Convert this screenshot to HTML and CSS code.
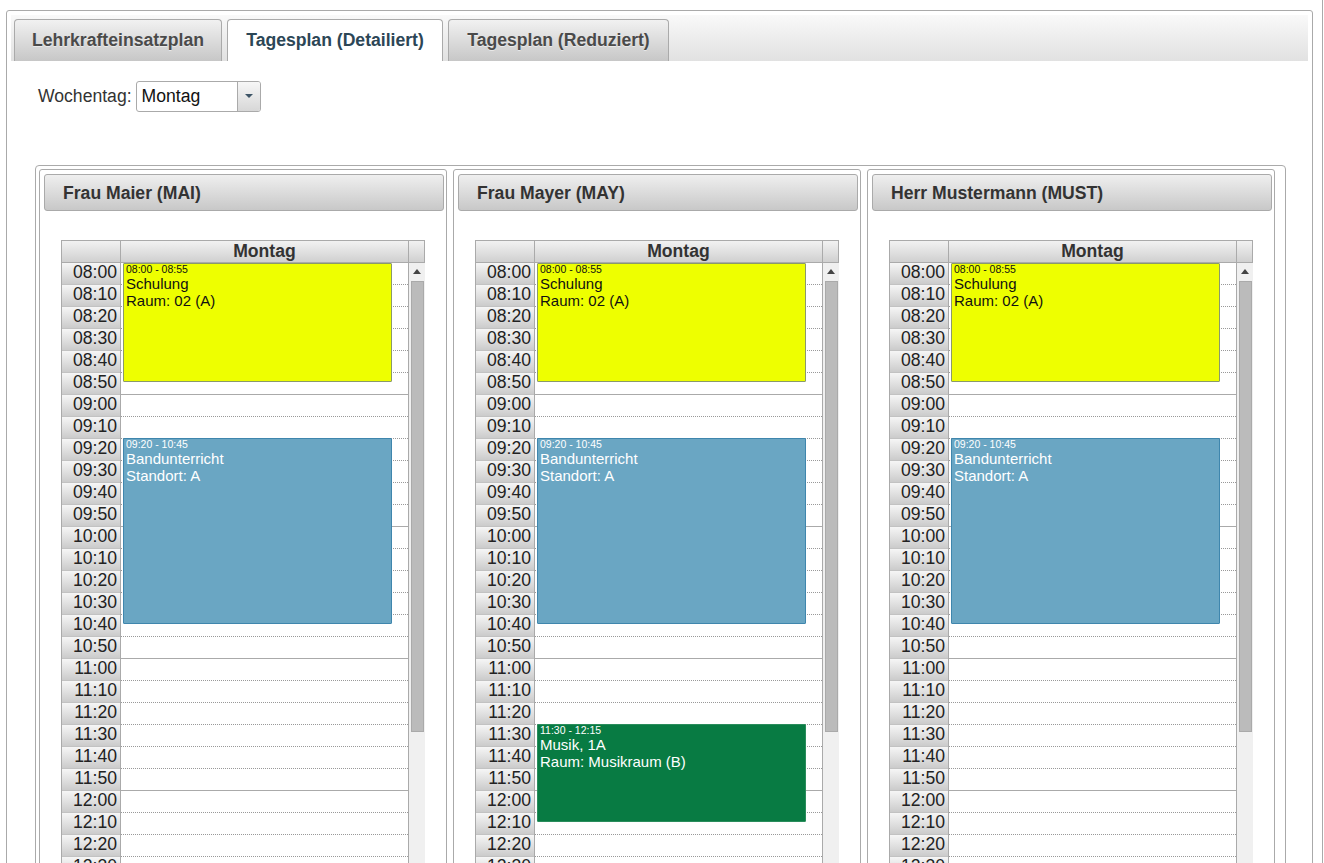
FILE: index.html
```html
<!DOCTYPE html>
<html lang="de">
<head>
<meta charset="utf-8">
<title>Tagesplan</title>
<link rel="stylesheet" href="styles.css">
</head>
<body>
<div class="frame">
  <div class="window">
    <div class="tabbar">
      <div class="tab w1">Lehrkrafteinsatzplan</div>
      <div class="tab w2 active">Tagesplan (Detailiert)</div>
      <div class="tab w3">Tagesplan (Reduziert)</div>
    </div>
    <div class="content">
      <div class="toolbar">
        <span class="label">Wochentag:</span>
        <div class="select"><span class="value">Montag</span><span class="btn"><span class="arrow"></span></span></div>
      </div>
      <div class="planner">

        <div class="col">
          <div class="col-head">Frau Maier (MAI)</div>
          <div class="cal">
            <div class="cal-head"><div class="h-time"></div><div class="h-day">Montag</div><div class="h-scroll"></div></div>
            <div class="cal-body">
              <div class="times">
                <div class="t">08:00</div><div class="t">08:10</div><div class="t">08:20</div><div class="t">08:30</div><div class="t">08:40</div><div class="t">08:50</div>
                <div class="t">09:00</div><div class="t">09:10</div><div class="t">09:20</div><div class="t">09:30</div><div class="t">09:40</div><div class="t">09:50</div>
                <div class="t">10:00</div><div class="t">10:10</div><div class="t">10:20</div><div class="t">10:30</div><div class="t">10:40</div><div class="t">10:50</div>
                <div class="t">11:00</div><div class="t">11:10</div><div class="t">11:20</div><div class="t">11:30</div><div class="t">11:40</div><div class="t">11:50</div>
                <div class="t">12:00</div><div class="t">12:10</div><div class="t">12:20</div><div class="t">12:30</div><div class="t">12:40</div><div class="t">12:50</div>
              </div>
              <div class="day">
                <div class="s"></div><div class="s"></div><div class="s"></div><div class="s"></div><div class="s"></div><div class="s h"></div>
                <div class="s"></div><div class="s"></div><div class="s"></div><div class="s"></div><div class="s"></div><div class="s h"></div>
                <div class="s"></div><div class="s"></div><div class="s"></div><div class="s"></div><div class="s"></div><div class="s h"></div>
                <div class="s"></div><div class="s"></div><div class="s"></div><div class="s"></div><div class="s"></div><div class="s h"></div>
                <div class="s"></div><div class="s"></div><div class="s"></div><div class="s"></div><div class="s"></div><div class="s h"></div>
                <div class="ev yellow" style="top:0px;height:119px"><div class="tm">08:00 - 08:55</div><div>Schulung</div><div>Raum: 02 (A)</div></div>
                <div class="ev blue" style="top:175px;height:186px"><div class="tm">09:20 - 10:45</div><div>Bandunterricht</div><div>Standort: A</div></div>
              </div>
              <div class="scroll"><div class="up"></div><div class="thumb"></div></div>
            </div>
          </div>
        </div>

        <div class="col">
          <div class="col-head">Frau Mayer (MAY)</div>
          <div class="cal">
            <div class="cal-head"><div class="h-time"></div><div class="h-day">Montag</div><div class="h-scroll"></div></div>
            <div class="cal-body">
              <div class="times">
                <div class="t">08:00</div><div class="t">08:10</div><div class="t">08:20</div><div class="t">08:30</div><div class="t">08:40</div><div class="t">08:50</div>
                <div class="t">09:00</div><div class="t">09:10</div><div class="t">09:20</div><div class="t">09:30</div><div class="t">09:40</div><div class="t">09:50</div>
                <div class="t">10:00</div><div class="t">10:10</div><div class="t">10:20</div><div class="t">10:30</div><div class="t">10:40</div><div class="t">10:50</div>
                <div class="t">11:00</div><div class="t">11:10</div><div class="t">11:20</div><div class="t">11:30</div><div class="t">11:40</div><div class="t">11:50</div>
                <div class="t">12:00</div><div class="t">12:10</div><div class="t">12:20</div><div class="t">12:30</div><div class="t">12:40</div><div class="t">12:50</div>
              </div>
              <div class="day">
                <div class="s"></div><div class="s"></div><div class="s"></div><div class="s"></div><div class="s"></div><div class="s h"></div>
                <div class="s"></div><div class="s"></div><div class="s"></div><div class="s"></div><div class="s"></div><div class="s h"></div>
                <div class="s"></div><div class="s"></div><div class="s"></div><div class="s"></div><div class="s"></div><div class="s h"></div>
                <div class="s"></div><div class="s"></div><div class="s"></div><div class="s"></div><div class="s"></div><div class="s h"></div>
                <div class="s"></div><div class="s"></div><div class="s"></div><div class="s"></div><div class="s"></div><div class="s h"></div>
                <div class="ev yellow" style="top:0px;height:119px"><div class="tm">08:00 - 08:55</div><div>Schulung</div><div>Raum: 02 (A)</div></div>
                <div class="ev blue" style="top:175px;height:186px"><div class="tm">09:20 - 10:45</div><div>Bandunterricht</div><div>Standort: A</div></div>
                <div class="ev green" style="top:461px;height:98px"><div class="tm">11:30 - 12:15</div><div>Musik, 1A</div><div>Raum: Musikraum (B)</div></div>
              </div>
              <div class="scroll"><div class="up"></div><div class="thumb"></div></div>
            </div>
          </div>
        </div>

        <div class="col">
          <div class="col-head">Herr Mustermann (MUST)</div>
          <div class="cal">
            <div class="cal-head"><div class="h-time"></div><div class="h-day">Montag</div><div class="h-scroll"></div></div>
            <div class="cal-body">
              <div class="times">
                <div class="t">08:00</div><div class="t">08:10</div><div class="t">08:20</div><div class="t">08:30</div><div class="t">08:40</div><div class="t">08:50</div>
                <div class="t">09:00</div><div class="t">09:10</div><div class="t">09:20</div><div class="t">09:30</div><div class="t">09:40</div><div class="t">09:50</div>
                <div class="t">10:00</div><div class="t">10:10</div><div class="t">10:20</div><div class="t">10:30</div><div class="t">10:40</div><div class="t">10:50</div>
                <div class="t">11:00</div><div class="t">11:10</div><div class="t">11:20</div><div class="t">11:30</div><div class="t">11:40</div><div class="t">11:50</div>
                <div class="t">12:00</div><div class="t">12:10</div><div class="t">12:20</div><div class="t">12:30</div><div class="t">12:40</div><div class="t">12:50</div>
              </div>
              <div class="day">
                <div class="s"></div><div class="s"></div><div class="s"></div><div class="s"></div><div class="s"></div><div class="s h"></div>
                <div class="s"></div><div class="s"></div><div class="s"></div><div class="s"></div><div class="s"></div><div class="s h"></div>
                <div class="s"></div><div class="s"></div><div class="s"></div><div class="s"></div><div class="s"></div><div class="s h"></div>
                <div class="s"></div><div class="s"></div><div class="s"></div><div class="s"></div><div class="s"></div><div class="s h"></div>
                <div class="s"></div><div class="s"></div><div class="s"></div><div class="s"></div><div class="s"></div><div class="s h"></div>
                <div class="ev yellow" style="top:0px;height:119px"><div class="tm">08:00 - 08:55</div><div>Schulung</div><div>Raum: 02 (A)</div></div>
                <div class="ev blue" style="top:175px;height:186px"><div class="tm">09:20 - 10:45</div><div>Bandunterricht</div><div>Standort: A</div></div>
              </div>
              <div class="scroll"><div class="up"></div><div class="thumb"></div></div>
            </div>
          </div>
        </div>

      </div>
    </div>
  </div>
</div>
</body>
</html>
```
FILE: styles.css
```css
html, body {
  margin: 0;
  padding: 0;
  background: #fff;
}
body {
  font-family: "Liberation Sans", Arial, sans-serif;
  color: #333;
}
.frame {
  width: 1322px;
  height: 863px;
  overflow: hidden;
  border-right: 1px solid #aaa;
}
.window {
  margin: 10px 9px 0 6px;
  border: 1px solid #aaa;
  border-radius: 3px;
  padding: 4px;
  height: 900px;
}
.tabbar {
  display: flex;
  align-items: flex-end;
  gap: 5px;
  height: 46px;
  box-sizing: border-box;
  padding: 4px 0 0 3px;
  background: linear-gradient(#f9f9f9, #e1e1e1);
}
.tab {
  height: 42px;
  box-sizing: border-box;
  border: 1px solid #aaa;
  border-bottom: none;
  border-radius: 4px 4px 0 0;
  background: linear-gradient(#f1f1f1, #c7c7c7);
  font-weight: bold;
  font-size: 17.6px;
  color: #4a4a4a;
  display: flex;
  align-items: center;
  justify-content: center;
  text-shadow: 0 1px 0 rgba(255,255,255,0.5);
}
.w1 { width: 208px; }
.w2 { width: 216px; }
.w3 { width: 221px; }
.tab.active {
  background: #fff;
  color: #2c4656;
}
.content {
  padding: 20px 0 0 24px;
}
.toolbar {
  display: flex;
  align-items: center;
  gap: 4px;
  padding-left: 3px;
}
.label {
  font-size: 17.6px;
  color: #333;
}
.select {
  width: 125px;
  height: 31px;
  box-sizing: border-box;
  border: 1px solid #aaa;
  border-radius: 3px;
  display: flex;
  overflow: hidden;
}
.select .value {
  flex: 1;
  font-size: 17.6px;
  line-height: 29px;
  padding-left: 5px;
  color: #111;
}
.select .btn {
  width: 22px;
  border-left: 1px solid #aaa;
  background: linear-gradient(#f7f7f7, #d7d7d7);
  display: flex;
  align-items: center;
  justify-content: center;
}
.arrow {
  width: 0;
  height: 0;
  border-left: 4px solid transparent;
  border-right: 4px solid transparent;
  border-top: 4px solid #3d5466;
  margin-top: -2px;
}
.planner {
  margin-top: 53px;
  width: 1251px;
  height: 800px;
  box-sizing: border-box;
  border: 1px solid #aaa;
  border-radius: 4px;
  padding: 3px;
  display: flex;
  gap: 6px;
}
.col {
  width: 408px;
  box-sizing: border-box;
  border: 1px solid #aaa;
  border-radius: 3px;
  padding: 4px 2px 4px 4px;
}
.col-head {
  width: 400px;
  height: 37px;
  box-sizing: border-box;
  border: 1px solid #aaa;
  border-radius: 3px;
  background: linear-gradient(#efefef, #c8c8c8);
  font-weight: bold;
  font-size: 17.6px;
  line-height: 36px;
  color: #333;
  padding-left: 18px;
}
.cal {
  margin: 29px 0 0 17px;
  width: 364px;
}
.cal-head {
  display: flex;
  height: 23px;
}
.cal-head > div {
  box-sizing: border-box;
  border: 1px solid #aaa;
  background: linear-gradient(#f2f2f2, #d0d0d0);
}
.h-time { width: 60px; }
.h-day {
  width: 288px;
  border-left: none !important;
  text-align: center;
  font-weight: bold;
  font-size: 17.6px;
  line-height: 21px;
  color: #333;
}
.h-scroll {
  width: 16px;
  border-left: none !important;
}
.cal-body {
  display: flex;
}
.times {
  width: 60px;
  box-sizing: border-box;
  border-left: 1px solid #aaa;
  border-right: 1px solid #aaa;
}
.t {
  height: 22px;
  box-sizing: border-box;
  border-bottom: 1px solid #c2c2c2;
  background: linear-gradient(#f6f6f6, #cbcbcb);
  text-align: right;
  padding-right: 3px;
  font-size: 17.6px;
  line-height: 19px;
  color: #222;
}
.day {
  width: 288px;
  box-sizing: border-box;
  border-right: 1px solid #aaa;
  position: relative;
  background: #fff;
}
.s {
  height: 22px;
  box-sizing: border-box;
  border-bottom: 1px dotted #999;
}
.s.h {
  border-bottom: 1px solid #aaa;
}
.ev {
  position: absolute;
  left: 2px;
  width: 269px;
  box-sizing: border-box;
  border: 1px solid;
  border-radius: 1px;
  padding: 0 2px;
  font-size: 15px;
  line-height: 17px;
  overflow: hidden;
}
.ev .tm {
  font-size: 10.5px;
  line-height: 11px;
}
.yellow {
  background: #eeff00;
  border-color: #8a9a6a;
  color: #111;
}
.blue {
  background: #6aa6c3;
  border-color: #3f86ad;
  color: #fff;
}
.green {
  background: #087b43;
  border-color: #2a8d5c;
  color: #fff;
}
.scroll {
  width: 16px;
  background: #f0f0f0;
  padding-top: 6px;
  box-sizing: border-box;
}
.up {
  width: 0;
  height: 0;
  border-left: 4px solid transparent;
  border-right: 4px solid transparent;
  border-bottom: 5px solid #444;
  margin: 0 auto;
}
.thumb {
  margin: 7px 0 0 2px;
  width: 13px;
  height: 451px;
  box-sizing: border-box;
  background: #bbb;
  border: 1px solid #aaa;
}
```
